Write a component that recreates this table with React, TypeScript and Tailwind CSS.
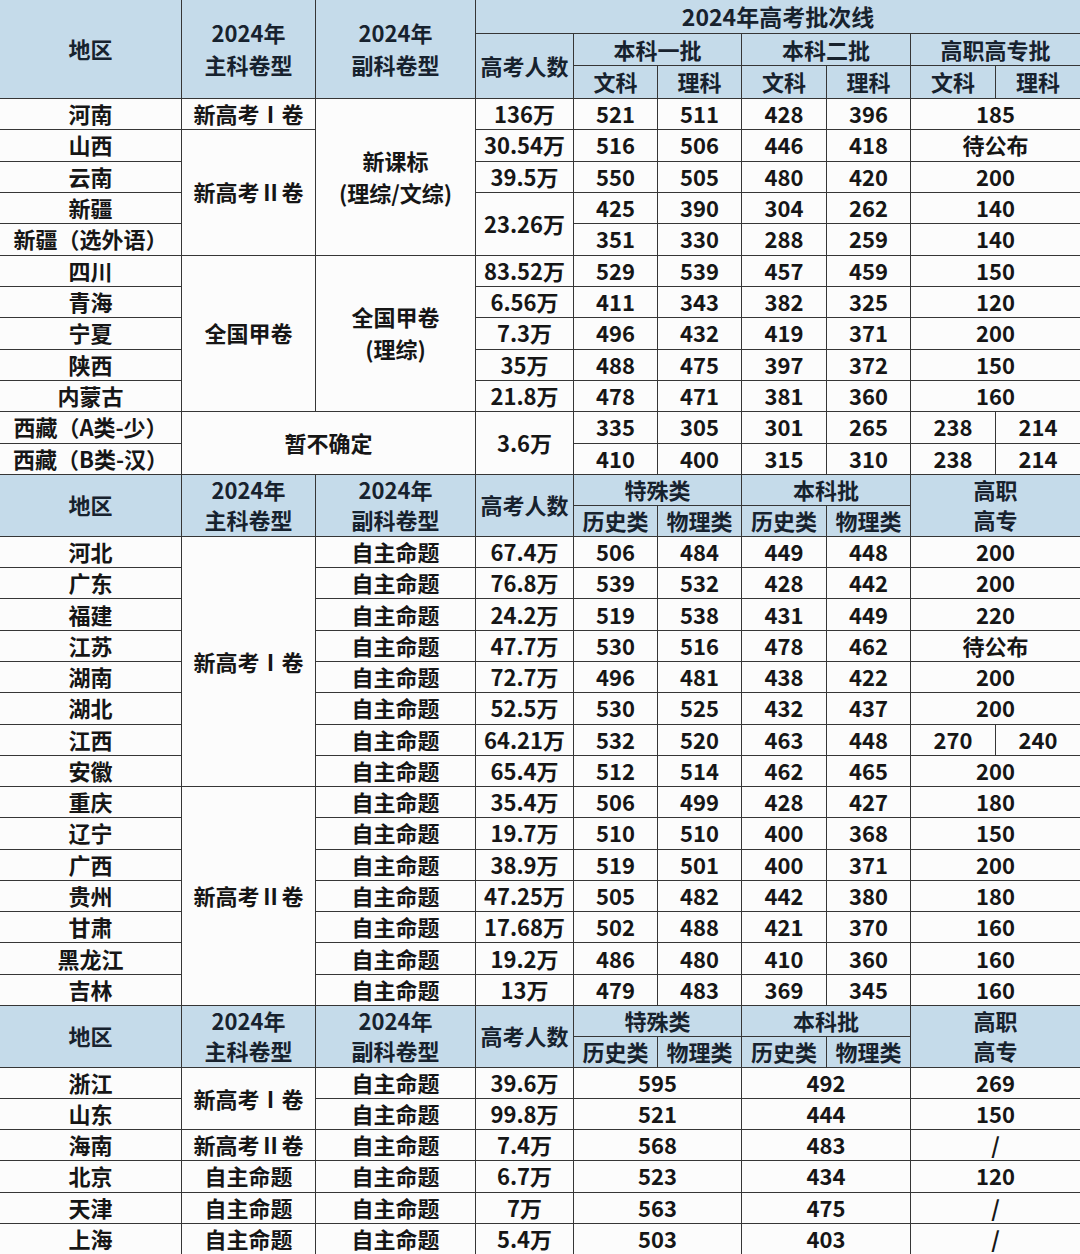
import React from 'react'

type Cell = { t: React.ReactNode; c?: string }

const H = 'flex items-center justify-center text-center pb-[2px] bg-[#c5dbea] text-[#17222e]'
const D = 'flex items-center justify-center text-center pb-[2px] bg-[#fcfcfc] text-[#161616]'
const COLS = 'grid grid-cols-[181px_133px_159px_97px_83px_83px_84px_83px_84px_84px] gap-px'

const c = (t: React.ReactNode, cls?: string): Cell => ({ t, c: cls })
const cs2 = 'col-span-2'

const section1: Cell[][] = [
  [c('河南'), c('新高考Ⅰ卷'), c(<>新课标<br />(理综/文综)</>, 'row-span-5 leading-[32px]'), c('136万'), c('521'), c('511'), c('428'), c('396'), c('185', cs2)],
  [c('山西'), c('新高考Ⅱ卷', 'row-span-4'), c('30.54万'), c('516'), c('506'), c('446'), c('418'), c('待公布', cs2)],
  [c('云南'), c('39.5万'), c('550'), c('505'), c('480'), c('420'), c('200', cs2)],
  [c('新疆'), c('23.26万', 'row-span-2'), c('425'), c('390'), c('304'), c('262'), c('140', cs2)],
  [c('新疆（选外语）'), c('351'), c('330'), c('288'), c('259'), c('140', cs2)],
  [c('四川'), c('全国甲卷', 'row-span-5'), c(<>全国甲卷<br />(理综)</>, 'row-span-5 leading-[32px]'), c('83.52万'), c('529'), c('539'), c('457'), c('459'), c('150', cs2)],
  [c('青海'), c('6.56万'), c('411'), c('343'), c('382'), c('325'), c('120', cs2)],
  [c('宁夏'), c('7.3万'), c('496'), c('432'), c('419'), c('371'), c('200', cs2)],
  [c('陕西'), c('35万'), c('488'), c('475'), c('397'), c('372'), c('150', cs2)],
  [c('内蒙古'), c('21.8万'), c('478'), c('471'), c('381'), c('360'), c('160', cs2)],
  [c('西藏（A类-少）'), c('暂不确定', 'col-span-2 row-span-2'), c('3.6万', 'row-span-2'), c('335'), c('305'), c('301'), c('265'), c('238'), c('214')],
  [c('西藏（B类-汉）'), c('410'), c('400'), c('315'), c('310'), c('238'), c('214')],
]

const section2: Cell[][] = [
  [c('河北'), c('新高考Ⅰ卷', 'row-span-8'), c('自主命题'), c('67.4万'), c('506'), c('484'), c('449'), c('448'), c('200', cs2)],
  [c('广东'), c('自主命题'), c('76.8万'), c('539'), c('532'), c('428'), c('442'), c('200', cs2)],
  [c('福建'), c('自主命题'), c('24.2万'), c('519'), c('538'), c('431'), c('449'), c('220', cs2)],
  [c('江苏'), c('自主命题'), c('47.7万'), c('530'), c('516'), c('478'), c('462'), c('待公布', cs2)],
  [c('湖南'), c('自主命题'), c('72.7万'), c('496'), c('481'), c('438'), c('422'), c('200', cs2)],
  [c('湖北'), c('自主命题'), c('52.5万'), c('530'), c('525'), c('432'), c('437'), c('200', cs2)],
  [c('江西'), c('自主命题'), c('64.21万'), c('532'), c('520'), c('463'), c('448'), c('270'), c('240')],
  [c('安徽'), c('自主命题'), c('65.4万'), c('512'), c('514'), c('462'), c('465'), c('200', cs2)],
  [c('重庆'), c('新高考Ⅱ卷', 'row-span-7'), c('自主命题'), c('35.4万'), c('506'), c('499'), c('428'), c('427'), c('180', cs2)],
  [c('辽宁'), c('自主命题'), c('19.7万'), c('510'), c('510'), c('400'), c('368'), c('150', cs2)],
  [c('广西'), c('自主命题'), c('38.9万'), c('519'), c('501'), c('400'), c('371'), c('200', cs2)],
  [c('贵州'), c('自主命题'), c('47.25万'), c('505'), c('482'), c('442'), c('380'), c('180', cs2)],
  [c('甘肃'), c('自主命题'), c('17.68万'), c('502'), c('488'), c('421'), c('370'), c('160', cs2)],
  [c('黑龙江'), c('自主命题'), c('19.2万'), c('486'), c('480'), c('410'), c('360'), c('160', cs2)],
  [c('吉林'), c('自主命题'), c('13万'), c('479'), c('483'), c('369'), c('345'), c('160', cs2)],
]

const section3: Cell[][] = [
  [c('浙江'), c('新高考Ⅰ卷', 'row-span-2'), c('自主命题'), c('39.6万'), c('595', cs2), c('492', cs2), c('269', cs2)],
  [c('山东'), c('自主命题'), c('99.8万'), c('521', cs2), c('444', cs2), c('150', cs2)],
  [c('海南'), c('新高考Ⅱ卷'), c('自主命题'), c('7.4万'), c('568', cs2), c('483', cs2), c('/', cs2)],
  [c('北京'), c('自主命题'), c('自主命题'), c('6.7万'), c('523', cs2), c('434', cs2), c('120', cs2)],
  [c('天津'), c('自主命题'), c('自主命题'), c('7万'), c('563', cs2), c('475', cs2), c('/', cs2)],
  [c('上海'), c('自主命题'), c('自主命题'), c('5.4万'), c('503', cs2), c('403', cs2), c('/', cs2)],
]

function Rows({ rows }: { rows: Cell[][] }) {
  return (
    <>
      {rows.flatMap((row, i) =>
        row.map((cell, j) => (
          <div key={`${i}-${j}`} className={`${D} ${cell.c ?? ''}`}>
            {cell.t}
          </div>
        ))
      )}
    </>
  )
}

function SubHeader() {
  return (
    <>
      <div className={`${H} row-span-2`}>地区</div>
      <div className={`${H} row-span-2 leading-[30px]`}>2024年<br />主科卷型</div>
      <div className={`${H} row-span-2 leading-[30px]`}>2024年<br />副科卷型</div>
      <div className={`${H} row-span-2`}>高考人数</div>
      <div className={`${H} col-span-2`}>特殊类</div>
      <div className={`${H} col-span-2`}>本科批</div>
      <div className={`${H} col-span-2 row-span-2 leading-[30px]`}>高职<br />高专</div>
      <div className={H}>历史类</div>
      <div className={H}>物理类</div>
      <div className={H}>历史类</div>
      <div className={H}>物理类</div>
    </>
  )
}

export default function App() {
  return (
    <div className="w-[1080px] h-[1254px] overflow-hidden flex flex-col gap-px bg-[#363636] font-['Noto_Sans_CJK_SC',sans-serif] font-bold text-[22px] leading-[26px]">
      <div className={`${COLS} grid-rows-[33px_31px_32px_repeat(12,30.33px)]`}>
        <div className={`${H} row-span-3`}>地区</div>
        <div className={`${H} row-span-3 leading-[32px]`}>2024年<br />主科卷型</div>
        <div className={`${H} row-span-3 leading-[32px]`}>2024年<br />副科卷型</div>
        <div className={`${H} col-span-7 text-[23px] leading-[28px]`}>2024年高考批次线</div>
        <div className={`${H} row-span-2`}>高考人数</div>
        <div className={`${H} col-span-2`}>本科一批</div>
        <div className={`${H} col-span-2`}>本科二批</div>
        <div className={`${H} col-span-2`}>高职高专批</div>
        <div className={H}>文科</div>
        <div className={H}>理科</div>
        <div className={H}>文科</div>
        <div className={H}>理科</div>
        <div className={H}>文科</div>
        <div className={H}>理科</div>
        <Rows rows={section1} />
      </div>

      <div className={`${COLS} grid-rows-[30px_30px_repeat(15,30.27px)]`}>
        <SubHeader />
        <Rows rows={section2} />
      </div>

      <div className={`${COLS} grid-rows-[30px_30px_repeat(6,30.17px)]`}>
        <SubHeader />
        <Rows rows={section3} />
      </div>
    </div>
  )
}
